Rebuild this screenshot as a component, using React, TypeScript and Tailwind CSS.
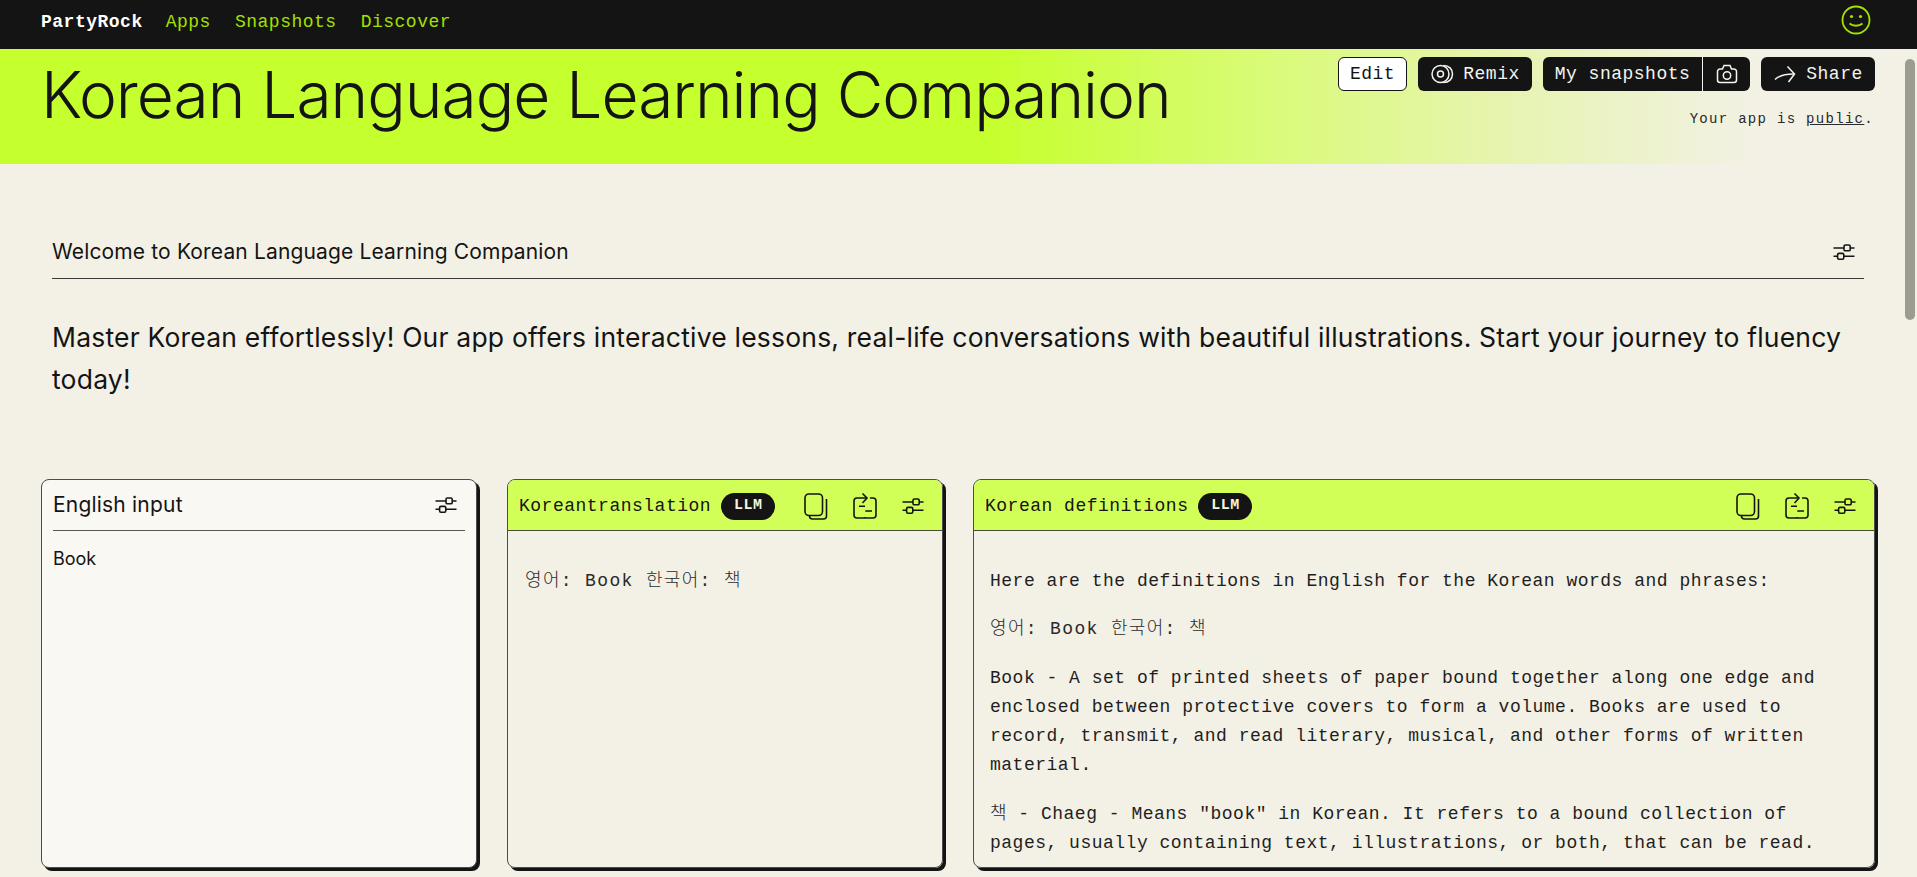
import React from "react";

const MONO = "font-['Liberation_Mono','Noto_Sans_CJK_KR',monospace]";
const SANS = "font-['Inter','Noto_Sans_CJK_KR',sans-serif]";

function Sliders() {
  return (
    <svg width="24" height="24" viewBox="0 0 24 24" fill="none" stroke="#141414" strokeWidth="1.6" className="shrink-0">
      <path d="M1.500 8h10.500M18.500 8h4M1.500 16.300h4M12 16.300h10.500" />
      <rect x="12" y="5" width="6.200" height="5.800" rx="1.400" />
      <rect x="5.600" y="13.400" width="6.200" height="5.800" rx="1.400" />
    </svg>
  );
}
function CopyIcon() {
  return (
    <svg width="26" height="28" viewBox="0 0 26 28" fill="none" stroke="#141414" strokeWidth="1.6" className="shrink-0">
      <rect x="2" y="2" width="17.500" height="21.500" rx="4" />
      <path d="M23.500 7v17a3 3 0 0 1-3 3H9.500a3 3 0 0 1-3-3" />
    </svg>
  );
}
function SwapIcon() {
  return (
    <svg width="26" height="28" viewBox="0 0 26 28" fill="none" stroke="#141414" strokeWidth="1.6" className="shrink-0">
      <path d="M15 6H5a3 3 0 0 0-3 3v14a3 3 0 0 0 3 3h16a3 3 0 0 0 3-3V9a3 3 0 0 0-3-3h-3" />
      <path d="M10.500 1.500 15 6l-4.500 5" />
      <path d="M7 14.300h6M13.300 19h6.700M13 26v-1" />
    </svg>
  );
}
function RemixIcon() {
  return (
    <svg width="24" height="24" viewBox="0 0 24 24" fill="none" stroke="#f5f5f0" strokeWidth="1.5">
      <circle cx="10.500" cy="12" r="8.500" />
      <circle cx="10.500" cy="12" r="3" />
      <path d="M13.500 3.500c5.500 0 9 3.600 9 8.500s-3.500 8.500-9 8.500" />
    </svg>
  );
}
function CameraIcon() {
  return (
    <svg width="24" height="24" viewBox="0 0 24 24" fill="none" stroke="#f5f5f0" strokeWidth="1.5">
      <path d="M5 7h2.500l1.500-3.500h6L16.500 7H19a2.500 2.500 0 0 1 2.500 2.500V18a2.500 2.500 0 0 1-2.500 2.500H5A2.500 2.500 0 0 1 2.500 18V9.500A2.500 2.500 0 0 1 5 7Z" />
      <circle cx="12" cy="13.500" r="3.700" />
    </svg>
  );
}
function ShareIcon() {
  return (
    <svg width="24" height="24" viewBox="0 0 24 24" fill="none" stroke="#f5f5f0" strokeWidth="1.5">
      <path d="M2 17.500C6 13.500 11 12 21 12" />
      <path d="M14.500 4.500 21.500 12l-6 8" />
    </svg>
  );
}
function Smile() {
  return (
    <svg width="30" height="30" viewBox="0 0 30 30" fill="none" stroke="#a4e000" strokeWidth="1.8">
      <circle cx="15" cy="15" r="13.500" />
      <circle cx="10.500" cy="11.500" r="1.600" fill="#a4e000" stroke="none" />
      <circle cx="19.500" cy="11.500" r="1.600" fill="#a4e000" stroke="none" />
      <path d="M8.500 18.500c3.500 3 9.500 3 13 0" />
    </svg>
  );
}

function LlmHeader({ title }: { title: string }) {
  return (
    <div className="flex h-[51px] items-center border-b border-[#4a4a3a] bg-[#d2ff57] pl-[11px] pr-[17px] pt-[2px]">
      <span className="text-[18px] tracking-[0.5px] text-[#141414]">{title}</span>
      <span className="ml-[10px] flex h-[27px] w-[54px] items-center justify-center rounded-full bg-[#141414] text-[15px] font-bold tracking-[0.5px] text-[#f2f6dc]">
        LLM
      </span>
      <div className="ml-auto flex items-center gap-[23px]">
        <CopyIcon />
        <SwapIcon />
        <Sliders />
      </div>
    </div>
  );
}

const cardClass =
  "h-[389px] overflow-hidden rounded-[8px] border border-[#4c4c4c] shadow-[3px_3px_0_#141414]";

function Korean() {
  return <p className="font-light tracking-[1.35px] text-[#2a2a2a]">영어: Book 한국어: 책</p>;
}

export default function App() {
  return (
    <div className={`relative h-[877px] overflow-hidden bg-[#f3f1e6] text-[#141414] ${SANS}`}>
      <nav className={`flex h-[49px] items-center bg-[#141414] pb-[5px] pl-[41px] pr-[46px] ${MONO}`}>
        <span className="text-[18px] font-bold tracking-[0.5px] text-white">PartyRock</span>
        <div className="ml-[23px] flex gap-[24px] text-[18px] tracking-[0.5px] text-[#a4e000]">
          <span>Apps</span>
          <span>Snapshots</span>
          <span>Discover</span>
        </div>
        <div className="mb-[5px] ml-auto">
          <Smile />
        </div>
      </nav>

      <header className="flex h-[115px] items-start justify-between bg-[linear-gradient(90deg,#c6ff2e_0%,#c6ff2e_52%,#d9fb78_66%,#e6f4ae_78%,#f3f1e6_92%)] pl-[41px] pr-[42px]">
        <h1 className="mt-[3px] text-[64px] font-light leading-[86px] tracking-[-1px]">
          Korean Language Learning Companion
        </h1>
        <div className={`flex flex-col items-end pt-[8px] ${MONO}`}>
          <div className="flex gap-[11px] text-[18px] tracking-[0.5px]">
            <button className="flex h-[34px] w-[69px] items-center justify-center rounded-[6px] border border-[#141414] bg-white">
              Edit
            </button>
            <button className="flex h-[34px] w-[114px] items-center justify-center gap-[9px] rounded-[6px] bg-[#141414] text-[#f5f5f0]">
              <RemixIcon />
              Remix
            </button>
            <div className="flex h-[34px] w-[207px] items-center rounded-[6px] bg-[#141414] text-[#f5f5f0]">
              <span className="flex h-full w-[160px] items-center justify-center border-r border-[#f5f5f0]">My snapshots</span>
              <span className="flex flex-1 items-center justify-center">
                <CameraIcon />
              </span>
            </div>
            <button className="flex h-[34px] w-[114px] items-center justify-center gap-[9px] rounded-[6px] bg-[#141414] text-[#f5f5f0]">
              <ShareIcon />
              Share
            </button>
          </div>
          <p className="mt-[18px] pr-[1px] text-[14px] tracking-[1.3px] text-[#2a2a2a]">
            Your app is <span className="underline">public</span>.
          </p>
        </div>
      </header>

      <section className="pl-[52px] pr-[53px] pt-[67px]">
        <div className="flex h-[48px] items-center justify-between border-b border-[#3a3a3a] pb-[5px] pr-[8px]">
          <h2 className="text-[21px] tracking-[0.15px]">Welcome to Korean Language Learning Companion</h2>
          <Sliders />
        </div>
        <p className="mt-[37px] text-[26.5px] leading-[42px] tracking-[0.2px]">
          Master Korean effortlessly! Our app offers interactive lessons, real-life conversations with beautiful illustrations. Start your journey to fluency today!
        </p>
      </section>

      <main className="mt-[79px] grid grid-cols-12 gap-[30px] pl-[41px] pr-[42px]">
        <div className={`col-span-3 bg-[#f9f8f3] ${cardClass}`}>
          <div className="mx-[11px] flex h-[51px] items-center justify-between border-b border-[#5a5a50] pr-[7px]">
            <span className="text-[21px] tracking-[0.2px]">English input</span>
            <Sliders />
          </div>
          <p className="mx-[11px] mt-[14px] text-[18px]">Book</p>
        </div>

        <div className={`col-span-3 ${MONO} ${cardClass}`}>
          <LlmHeader title="Koreantranslation" />
          <div className="h-[321px] overflow-hidden px-[17px] pt-[36px] text-[18px] leading-[29px] tracking-[0.5px]">
            <Korean />
          </div>
        </div>

        <div className={`col-span-6 ${MONO} ${cardClass}`}>
          <LlmHeader title="Korean definitions" />
          <div className="flex h-[321px] flex-col gap-[19px] overflow-hidden px-[16px] pt-[36px] text-[18px] leading-[29.25px] tracking-[0.5px] text-[#1e1e1e]">
            <p>Here are the definitions in English for the Korean words and phrases:</p>
            <Korean />
            <p>
              Book - A set of printed sheets of paper bound together along one edge and enclosed between protective covers to form a volume. Books are used to record, transmit, and read literary, musical, and other forms of written material.
            </p>
            <p className="font-light">
              책 - Chaeg - Means "book" in Korean. It refers to a bound collection of pages, usually containing text, illustrations, or both, that can be read.
            </p>
          </div>
        </div>
      </main>

      <div className="absolute right-[2px] top-[59px] h-[261px] w-[10px] rounded-full bg-[#9c9c92]" />
    </div>
  );
}
